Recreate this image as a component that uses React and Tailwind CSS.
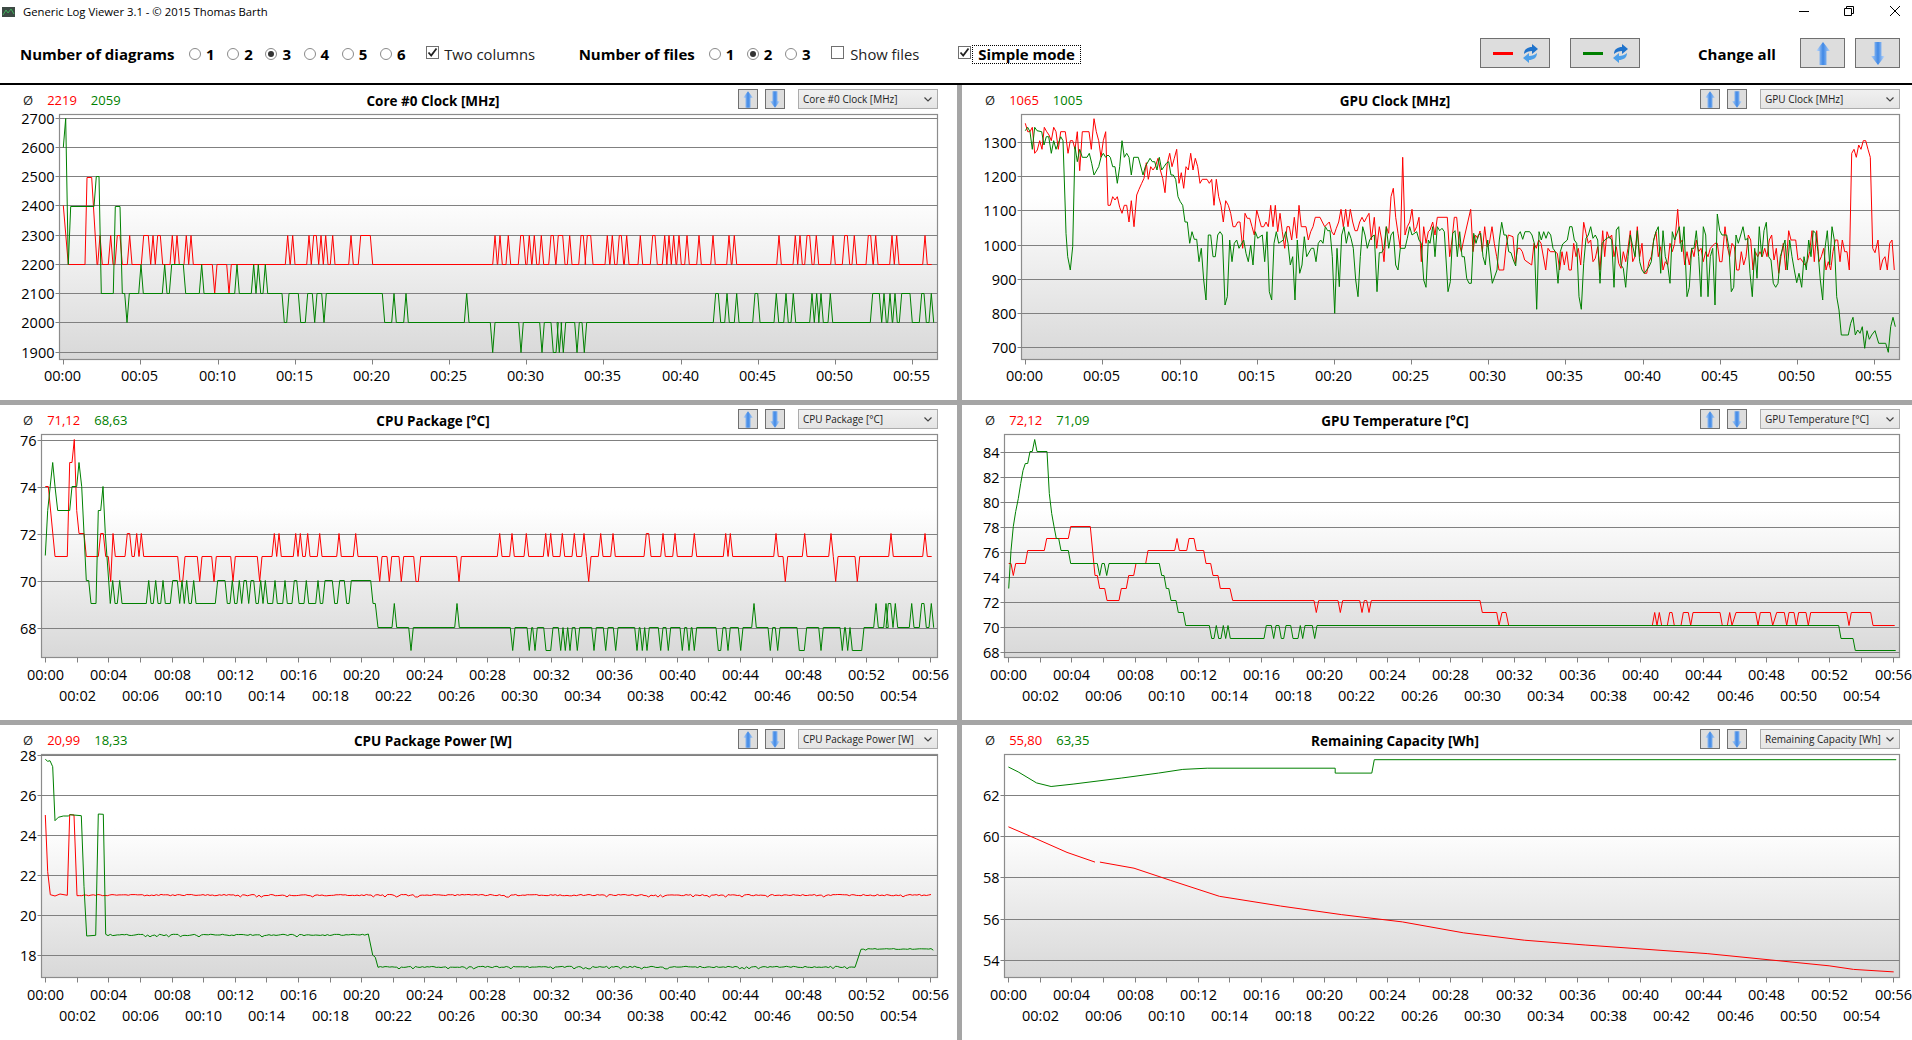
import React from "react";

// helpers for the plot data, coords are in 3x page pixels like the crops
const steps = (base, peak, evs, w = 7) => {
  const out = [];
  evs.forEach((e) => {
    const [a, b, l] = Array.isArray(e) ? e : [e, e];
    const lvl = l ?? peak;
    out.push([a - w, base], [a, lvl]);
    if (b !== a) out.push([b, lvl]);
    out.push([b + w, base]);
  });
  return out;
};
const shift = (evs, d) => evs.map((e) => (Array.isArray(e) ? [e[0] + d, e[1] + d, e[2]] : e + d));
const pairs = (a) => {
  const out = [];
  for (let i = 0; i < a.length; i += 2) out.push([a[i], a[i + 1]]);
  return out;
};
const shiftPts = (pts, d) => pts.map(([x, y]) => [x + d, y]);
const noise = (from, to, y, amp, seed) => {
  const out = [];
  let i = 0;
  for (let x = from; x <= to; x += 7) {
    const r = Math.sin(i * 12.9898 + seed) * 43758.5453;
    const f = r - Math.floor(r);
    const big = f > 0.93 ? 2.6 : 1;
    out.push([x, y + (f - 0.5) * 2 * amp * big]);
    i++;
  }
  return out;
};

const coreRed = [
  ...pairs([190, 316, 205, 493, 255, 493, 261, 232, 275, 232, 291, 493]),
  ...steps(493, 406, [300, 332, [352, 360], 389, [431, 445], 459, [473, 481], 517, 531, 559, 573]),
  ...pairs([637, 493, 644, 580, 651, 493, 680, 493, 687, 580, 694, 493]),
  ...steps(493, 406, [
    863, 878, 927, [941, 949], 963, 977, 998, 1053, [1082, 1111], 1485, 1500,
    ...shift([25, [62, 70], 88, 103, 124, [153, 160], [175, 188], 209, [243, 250], [262, 272], 322, 337, [358, 364], 380, 421, [458, 465], 494, 507, 521, 537, 561, 597, 639, 687, 703, 837, 886, 900, [921, 929], 949, 999, [1034, 1042], 1063, [1105, 1112], 1127, 1176, 1190, 1275], 1500),
  ]),
  [2795, 493],
];
const coreGreen = [
  ...pairs([190, 142, 197, 55, 205, 493, 212, 318, 282, 318, 289, 230, 297, 230, 304, 580, 340, 580, 346, 318, 360, 318, 367, 580, 374, 580, 381, 667, 388, 580]),
  ...steps(580, 493, [423, 494, [515, 550], 605, 711, 761, 775, 796, [853, 860, 667], [902, 916, 667], [944, 944, 667], [972, 972, 667]]),
  [1147, 580],
  [1154, 667],
  ...steps(667, 580, [1182, 1218, 1400, [1478, 1478, 757], ...shift([[63, 63, 757], [126, 126, 757], [160, 168, 757], [178, 178, 757], [190, 190, 757], [231, 231, 757], [253, 253, 757], [647, 655], 681, 710, [765, 773], 829, 858, 880, 936, 950, 963, 991, [1118, 1138], 1152, 1170, 1185, [1205, 1230], [1265, 1272], 1294], 1500)]),
  [2802, 667],
];

const clockRed6 = pairs([196, 70, 203, 95, 210, 95, 217, 82, 224, 160, 232, 150, 239, 122, 246, 148, 253, 82, 260, 95, 267, 105, 274, 122, 281, 82, 288, 95, 295, 148, 302, 95, 316, 95, 324, 160, 331, 122, 338, 122, 345, 148, 352, 95, 359, 212, 367, 95, 387, 95, 394, 148, 402, 56, 409, 95, 416, 122, 423, 172, 430, 122, 437, 95, 444, 316, 451, 316, 458, 290, 465, 300, 472, 290, 479, 322, 486, 340, 493, 316, 500, 316, 507, 366, 514, 302, 522, 380, 530, 285, 537, 268, 545, 250, 552, 235, 559, 188, 565, 238, 572, 200, 579, 210, 586, 200, 594, 175, 601, 210, 608, 235, 615, 278, 622, 190, 629, 160, 636, 200, 643, 175, 650, 148, 657, 250, 664, 218, 671, 265, 678, 200, 685, 210, 692, 160, 699, 210, 706, 175, 713, 200, 720, 250, 727, 238, 741, 238, 748, 250, 755, 238, 762, 316, 769, 238, 776, 290, 783, 316, 790, 366, 797, 302, 805, 316, 812, 340, 819, 380, 826, 380, 833, 366, 840, 366, 848, 445, 855, 340, 862, 355, 869, 355, 876, 380, 883, 405, 890, 330, 897, 355, 904, 380, 911, 380, 918, 366, 925, 380, 932, 316, 939, 380, 946, 316, 953, 395, 960, 340, 967, 395, 974, 445, 981, 380, 988, 380, 995, 420, 1003, 352, 1010, 415, 1017, 316, 1024, 380, 1038, 380, 1045, 420, 1052, 395, 1059, 380, 1066, 352, 1080, 352, 1087, 366, 1094, 380, 1108, 366, 1115, 395, 1122, 405, 1129, 385, 1136, 366, 1143, 328, 1150, 380, 1157, 328, 1164, 380, 1171, 328, 1178, 366, 1185, 392, 1192, 392, 1199, 366, 1206, 352, 1213, 366, 1220, 352, 1227, 340, 1234, 420, 1243, 352, 1250, 445, 1258, 380, 1265, 420, 1272, 485, 1279, 380, 1286, 400, 1293, 290, 1300, 265, 1307, 352, 1314, 400, 1321, 445, 1328, 172, 1335, 405, 1342, 380, 1349, 366, 1356, 328, 1363, 395, 1370, 380, 1377, 352, 1384, 485, 1391, 380, 1398, 430, 1405, 395]);
const clockRed7 = pairs([0, 390, 8, 366, 15, 405, 22, 352, 52, 352, 59, 470, 66, 420, 73, 352, 80, 352, 87, 430, 94, 455, 101, 420, 122, 328, 129, 455, 136, 405, 143, 415, 150, 393, 157, 455, 164, 380, 171, 440, 178, 430, 186, 380, 193, 430, 200, 470, 207, 510, 221, 510, 228, 440, 235, 405, 249, 410, 256, 490, 263, 445, 270, 445, 277, 455, 284, 480, 291, 485, 305, 495, 312, 430, 319, 445, 326, 420, 333, 430, 347, 510, 354, 445, 361, 455, 375, 455, 382, 460, 389, 510, 396, 455, 403, 495, 410, 455, 417, 510, 424, 510, 431, 430, 438, 470, 445, 445, 452, 495, 461, 367, 468, 400, 475, 430, 482, 420, 489, 485, 496, 475, 503, 440, 510, 510, 518, 392, 524, 470, 531, 395, 538, 415, 545, 405, 552, 470, 559, 440, 566, 490, 573, 505, 580, 455, 587, 485, 594, 445, 601, 392, 608, 485, 615, 470, 622, 380, 629, 470, 636, 430, 643, 520, 650, 520, 657, 485, 664, 470, 671, 420, 678, 395, 685, 470, 692, 440, 699, 510, 706, 485, 713, 495, 720, 430, 727, 455, 734, 430, 743, 328, 750, 430, 757, 420, 764, 495, 771, 455, 778, 495, 785, 445, 792, 470, 799, 420, 806, 455, 813, 445, 820, 485, 827, 455, 834, 470, 841, 445, 855, 430, 862, 430, 869, 485, 876, 485, 885, 380, 892, 440, 899, 470, 906, 430, 913, 440, 920, 510, 927, 510, 934, 455, 941, 495, 948, 470, 955, 405, 962, 420, 969, 510, 976, 455, 983, 470, 990, 455, 997, 470, 1004, 445, 1011, 470, 1018, 420, 1025, 405, 1032, 480, 1039, 445, 1046, 520, 1053, 470, 1060, 430, 1067, 510, 1076, 392, 1083, 420, 1097, 420, 1104, 480, 1111, 475, 1118, 485, 1125, 495, 1132, 485, 1139, 455, 1146, 392, 1153, 485, 1160, 392, 1167, 485, 1174, 470, 1181, 445, 1188, 510, 1195, 485, 1202, 510, 1209, 455, 1216, 420, 1223, 420, 1230, 485, 1237, 420, 1244, 455, 1251, 455, 1258, 510, 1265, 160, 1272, 148, 1279, 172, 1286, 135, 1293, 148, 1300, 122, 1307, 122, 1314, 148, 1321, 172, 1328, 445, 1335, 458, 1344, 420, 1351, 510, 1358, 480, 1365, 470, 1372, 510, 1379, 430, 1386, 420, 1393, 510]);
const clockGreen6 = pairs([196, 92, 203, 82, 210, 95, 217, 148, 224, 82, 231, 92, 245, 95, 252, 135, 259, 110, 266, 110, 274, 160, 281, 122, 288, 148, 295, 130, 302, 110, 309, 122, 316, 330, 318, 400, 323, 470, 331, 510, 338, 440, 345, 140, 352, 185, 359, 148, 367, 172, 381, 172, 388, 160, 395, 190, 402, 225, 416, 200, 423, 172, 430, 160, 437, 172, 444, 165, 451, 172, 458, 200, 465, 200, 472, 250, 479, 200, 486, 122, 493, 172, 500, 160, 507, 172, 514, 225, 521, 172, 535, 172, 549, 225, 556, 200, 570, 175, 577, 185, 584, 185, 591, 210, 598, 172, 605, 210, 612, 200, 619, 190, 626, 185, 633, 225, 640, 225, 647, 238, 654, 290, 661, 305, 668, 316, 675, 366, 682, 366, 689, 430, 696, 395, 703, 418, 710, 418, 717, 485, 724, 445, 731, 540, 738, 600, 745, 405, 752, 405, 759, 470, 766, 470, 773, 405, 780, 395, 787, 405, 795, 615, 802, 590, 809, 420, 816, 485, 823, 430, 830, 420, 837, 445, 851, 420, 858, 460, 865, 485, 872, 435, 879, 495, 886, 395, 893, 415, 907, 405, 914, 485, 921, 395, 928, 575, 935, 600, 942, 430, 949, 395, 956, 430, 970, 420, 977, 395, 984, 430, 991, 495, 998, 470, 1005, 600, 1012, 420, 1019, 520, 1026, 495, 1033, 410, 1040, 470, 1054, 445, 1061, 445, 1068, 485, 1075, 430, 1082, 420, 1089, 430, 1096, 380, 1103, 392, 1110, 392, 1117, 470, 1124, 640, 1131, 445, 1138, 560, 1145, 405, 1152, 380, 1159, 430, 1166, 395, 1173, 415, 1180, 445, 1187, 540, 1194, 590, 1201, 470, 1208, 380, 1215, 405, 1222, 445, 1229, 420, 1236, 410, 1243, 405, 1251, 575, 1258, 458, 1265, 458, 1272, 445, 1279, 380, 1286, 445, 1293, 405, 1300, 395, 1307, 495, 1314, 510, 1321, 445, 1335, 445, 1342, 415, 1349, 380, 1356, 405, 1370, 395, 1377, 420, 1384, 430, 1391, 540, 1398, 562, 1405, 420]);
const clockGreen7 = pairs([0, 430, 8, 380, 15, 470, 22, 380, 29, 392, 36, 385, 43, 395, 50, 510, 54, 575, 61, 545, 68, 400, 75, 392, 82, 470, 89, 395, 96, 470, 103, 470, 110, 535, 117, 550, 124, 550, 131, 400, 138, 430, 145, 405, 152, 400, 159, 470, 166, 495, 173, 420, 180, 495, 187, 550, 201, 510, 208, 420, 215, 367, 222, 405, 229, 405, 236, 455, 243, 458, 250, 480, 257, 498, 264, 405, 271, 395, 278, 418, 285, 395, 299, 395, 306, 405, 313, 430, 320, 628, 327, 395, 334, 420, 341, 395, 348, 415, 355, 395, 362, 405, 369, 445, 376, 455, 384, 550, 391, 455, 398, 432, 412, 420, 419, 380, 426, 380, 433, 420, 440, 430, 447, 590, 454, 628, 461, 490, 468, 415, 475, 405, 482, 380, 489, 415, 496, 405, 503, 420, 510, 550, 517, 430, 524, 420, 538, 410, 545, 420, 552, 562, 559, 390, 566, 380, 573, 495, 580, 505, 587, 562, 594, 470, 601, 405, 615, 470, 622, 392, 629, 485, 636, 510, 643, 520, 657, 500, 664, 485, 671, 420, 678, 395, 685, 380, 692, 520, 699, 392, 706, 470, 713, 495, 720, 550, 727, 395, 734, 420, 748, 380, 755, 455, 762, 380, 771, 590, 778, 562, 785, 445, 792, 445, 799, 392, 806, 470, 813, 590, 820, 380, 827, 405, 834, 590, 841, 470, 848, 445, 855, 615, 862, 342, 869, 392, 876, 405, 890, 405, 897, 445, 904, 575, 911, 562, 918, 405, 925, 430, 932, 405, 939, 380, 946, 420, 953, 415, 960, 520, 967, 590, 974, 445, 981, 535, 988, 380, 995, 470, 1002, 392, 1009, 367, 1016, 470, 1023, 480, 1030, 550, 1037, 562, 1044, 550, 1051, 470, 1058, 445, 1065, 420, 1072, 510, 1079, 420, 1086, 470, 1093, 510, 1100, 548, 1107, 520, 1115, 562, 1122, 470, 1129, 510, 1136, 420, 1143, 470, 1150, 392, 1157, 400, 1164, 455, 1171, 540, 1178, 600, 1185, 445, 1192, 392, 1199, 495, 1206, 380, 1213, 420, 1220, 590, 1227, 630, 1234, 705, 1255, 705, 1262, 670, 1269, 652, 1276, 705, 1283, 690, 1290, 700, 1297, 680, 1304, 745, 1311, 692, 1318, 718, 1325, 705, 1335, 692, 1346, 730, 1367, 730, 1375, 757, 1382, 680, 1389, 652, 1396, 680]);

const pkgRed = [
  ...pairs([136, 258, 145, 258, 165, 470, 202, 470, 209, 187, 216, 187, 223, 117, 230, 330, 237, 400, 252, 400, 259, 470, 295, 470, 302, 400, 310, 400, 317, 470, 325, 470, 332, 544, 339, 400, 346, 470]),
  ...steps(470, 400, [[382, 389], 410, 424, [540, 548, 544], [599, 599, 544], [642, 642, 544], [699, 699, 544], [779, 779, 544], 823, 837, 887, 901, 923, 959, 1017, 1067, [1139, 1139, 544], [1168, 1168, 544], [1204, 1204, 544], [1248, 1255, 544], [1377, 1377, 544], 1499,
    ...shift([36, 79, 137, 152, 187, 223, 252, [266, 266, 544], 302, 339, [439, 446], 489, 525, 583, 677, 691, 828, [856, 856, 544], 914, 993, [1007, 1007, 544], [1072, 1072, 544], 1173, 1275], 1500)]),
  [2795, 470],
];
const pkgGreen = [
  ...pairs([136, 466, 143, 330, 158, 187, 165, 260, 173, 330, 209, 330, 216, 260, 230, 260, 237, 187, 245, 260, 252, 400, 259, 540, 266, 540, 273, 610, 288, 610, 295, 330, 302, 330, 309, 258, 316, 400, 331, 610]),
  ...steps(610, 540, [338, 359, 446, 467, 489, [518, 532], 546, 560, 581, [653, 675], 697, 718, [732, 739], [753, 761], 782, 796, 825, 855, [883, 890], 919, 954, [975, 997], [1019, 1033], [1054, 1112]]),
  [1126, 610],
  [1134, 682],
  ...steps(682, 610, [1183, [1233, 1233, 751], 1371,
    ...shift([[38, 38, 751], [88, 88, 751], [105, 105, 751], [138, 152, 751], [182, 182, 751], [196, 196, 751], [210, 210, 751], [232, 232, 751], [282, 282, 751], [317, 317, 751], [347, 347, 751], [411, 411, 751], [427, 427, 751], [441, 441, 751], [482, 482, 751], [505, 505, 751], [547, 547, 751], [567, 567, 751], [583, 583, 751], [655, 662, 751], [684, 684, 751], [722, 722, 751], 762, [811, 811, 751], [833, 833, 751], [898, 913, 751], [963, 963, 751], [1027, 1027, 751], [1043, 1043, 751], [1057, 1085, 751], 1128, 1158, [1165, 1172], 1186, 1235, [1265, 1272], 1294], 1500)]),
  [2802, 682],
];

const tempRed = [
  ...pairs([146, 489, 153, 489, 160, 527, 167, 489, 196, 489, 203, 452, 253, 452, 260, 414, 325, 414, 332, 380, 391, 380, 405, 527, 412, 527, 419, 565, 434, 565, 441, 602, 477, 602, 484, 565, 499, 565, 506, 527, 521, 527, 528, 489, 557, 489, 564, 452, 644, 452, 651, 414, 658, 452, 680, 452, 687, 414, 702, 414, 709, 452, 731, 452, 738, 489, 752, 489, 759, 527, 774, 527, 781, 565, 810, 565, 818, 602, 1062, 602, 1069, 638, 1076, 602, 1134, 602, 1141, 638, 1148, 602, 1199, 602, 1206, 638, 1213, 602, 1220, 602, 1227, 638, 1234, 602]),
  ...shiftPts(pairs([150, 602, 157, 638, 200, 638, 207, 677, 216, 638, 228, 638, 236, 677, 667, 677, 674, 638, 681, 677, 688, 638, 695, 677, 712, 677, 719, 638, 726, 638, 733, 677, 753, 677, 760, 638, 775, 638, 782, 677, 789, 638, 870, 638, 877, 677, 892, 677, 899, 638, 906, 677, 918, 638, 977, 638, 984, 677, 991, 638, 1021, 638, 1028, 677, 1040, 638, 1063, 638, 1070, 677, 1077, 638, 1092, 638, 1099, 677, 1106, 638, 1128, 638, 1135, 677, 1142, 638, 1250, 638, 1257, 677, 1264, 638, 1322, 638, 1329, 677, 1394, 677]), 1410),
];
const tempGreen = [
  ...pairs([146, 565, 153, 450, 160, 380, 167, 335, 175, 295, 182, 250, 189, 210, 196, 190, 203, 190, 210, 155, 217, 155, 224, 117, 231, 155, 261, 155, 268, 280, 275, 340, 282, 380, 289, 414, 296, 414, 303, 452, 325, 452, 332, 489, 412, 489, 419, 527, 426, 489, 433, 489, 440, 527, 447, 489, 598, 489, 605, 527, 612, 527, 619, 565, 626, 565, 633, 602, 648, 602, 655, 638, 670, 638, 677, 677, 748, 677, 755, 714, 762, 714, 769, 677, 776, 714, 783, 714, 790, 677, 797, 714, 804, 677, 811, 714, 912, 714, 919, 677, 934, 677, 941, 714, 948, 677, 957, 677, 964, 714, 971, 714, 978, 677, 992, 677, 999, 714, 1014, 714, 1021, 677, 1028, 714, 1035, 677, 1057, 677, 1064, 714, 1071, 677]),
  [2636, 677], [2643, 714], [2679, 714], [2686, 751], [2807, 751],
];

const powerRed = [
  ...pairs([136, 285, 143, 455, 151, 524, 165, 528, 180, 522, 202, 526, 209, 284, 222, 285, 231, 527]),
  ...noise(238, 2798, 525.5, 2.2, 1.7),
];
const powerGreen = [
  ...pairs([136, 118, 143, 124, 150, 122, 158, 140, 165, 302, 175, 292, 190, 288, 205, 288, 210, 284, 244, 287, 252, 500, 260, 648, 287, 646, 295, 282, 310, 283, 317, 643]),
  ...noise(324, 1098, 645, 2.2, 4.3),
  ...pairs([1105, 642, 1118, 705, 1126, 712, 1134, 742]),
  ...noise(1141, 2558, 741, 2.2, 7.9),
  ...pairs([2565, 742, 2583, 688]),
  ...noise(2590, 2800, 687, 1.4, 2.2),
];

// these two were read off the shrunk picture (1568 wide)
const shrunk = (a) => pairs(a).map(([x, y]) => [x * 1.2194 * 3 - 2880, (y * 1.2194 - 720) * 3]);
const capGreen = shrunk([827, 629, 835, 633, 850, 642, 862, 645, 880, 643, 920, 638, 950, 634, 970, 631, 990, 630, 1095, 630, 1095, 634, 1125, 634, 1127, 623, 1555, 623]);
const capRed = shrunk([827, 678, 850, 688, 875, 699, 898, 707]);
const capRed2 = shrunk([902, 707, 930, 712, 960, 722, 1000, 735, 1050, 743, 1100, 750, 1150, 756, 1200, 765, 1250, 771, 1300, 775, 1400, 782, 1500, 792, 1520, 795, 1553, 797]);

const charts = [
  { title: "Core #0 Clock [MHz]", a: "2219", b: "2059", x0: 0, top: 114, oy: 100, ox: 0, left: 59.5, bottom: 245.5,
    ticks: [["2700", 118], ["2600", 147], ["2500", 176], ["2400", 205], ["2300", 235], ["2200", 264], ["2100", 293], ["2000", 322], ["1900", 352]],
    t0: 63.3, red: coreRed, green: coreGreen, snap: true, five: true },
  { title: "GPU Clock [MHz]", a: "1065", b: "1005", x0: 962, top: 114, oy: 100, ox: 960, left: 59.5, bottom: 245.5,
    ticks: [["1300", 142], ["1200", 176], ["1100", 210], ["1000", 245], ["900", 279], ["800", 313], ["700", 347]],
    t0: 63.3, red: [...clockRed6, ...shiftPts(clockRed7, 1410)], green: [...clockGreen6, ...shiftPts(clockGreen7, 1410)], five: true },
  { title: "CPU Package [°C]", a: "71,12", b: "68,63", x0: 0, top: 434, oy: 400, ox: 0, left: 41.5, bottom: 223.5,
    ticks: [["76", 440], ["74", 487], ["72", 534], ["70", 581], ["68", 628]],
    t0: 45.3, red: pkgRed, green: pkgGreen, snap: true },
  { title: "GPU Temperature [°C]", a: "72,12", b: "71,09", x0: 962, top: 434, oy: 400, ox: 960, left: 42.5, bottom: 223.5,
    ticks: [["84", 452], ["82", 477], ["80", 502], ["78", 527], ["76", 552], ["74", 577], ["72", 602], ["70", 627], ["68", 652]],
    t0: 46.3, red: tempRed, green: tempGreen, snap: true },
  { title: "CPU Package Power [W]", a: "20,99", b: "18,33", x0: 0, top: 754, oy: 720, ox: 0, left: 41.5, bottom: 223.5,
    ticks: [["28", 755], ["26", 795], ["24", 835], ["22", 875], ["20", 915], ["18", 955]],
    t0: 45.3, red: powerRed, green: powerGreen },
  { title: "Remaining Capacity [Wh]", a: "55,80", b: "63,35", x0: 962, top: 754, oy: 720, ox: 960, left: 42.5, bottom: 223.5,
    ticks: [["62", 795], ["60", 836], ["58", 877], ["56", 919], ["54", 960]],
    t0: 46.3, red: capRed, red2: capRed2, green: capGreen },
];

function Plot({ c }) {
  const right = 937.5;
  const pts = (list) =>
    list
      .map(([x, y]) => {
        const px = c.ox + x / 3 - c.x0;
        let py = c.oy + y / 3 - c.top;
        if (c.snap) py = Math.floor(py) + 0.5;
        return `${px.toFixed(1)},${py.toFixed(1)}`;
      })
      .join(" ");
  const xs = [];
  if (c.five) {
    for (let m = 0; m <= 55; m += 5) xs.push({ m, row: 0 });
  } else {
    for (let m = 0; m <= 56; m += 2) xs.push({ m, row: m % 4 === 0 ? 0 : 1 });
  }
  const perMin = c.five ? 15.43 : 15.79;
  return (
    <svg width="950" height="286" className="block overflow-visible">
      <defs>
        <linearGradient id="plotFill" x1="0" y1="0" x2="0" y2="1">
          <stop offset="0.33" stopColor="#ffffff" />
          <stop offset="1" stopColor="#d8d8d8" />
        </linearGradient>
      </defs>
      <rect x={c.left} y="0.5" width={right - c.left} height={c.bottom - 0.5} fill="url(#plotFill)" stroke="#8c8c8c" strokeWidth="1.2" />
      {c.ticks.map(([label, y]) => {
        const yy = y - c.top + 0.5;
        return (
          <g key={label}>
            <line x1={c.left - 4} x2={right} y1={yy} y2={yy} stroke="#808080" strokeWidth="1" />
            <text x={c.left - 5} y={yy + 5.5} textAnchor="end" fontSize="14.5" fill="#000">{label}</text>
          </g>
        );
      })}
      {xs.map(({ m, row }) => {
        const x = Math.round(c.t0 + m * perMin) + 0.5;
        const label = `00:${String(m).padStart(2, "0")}`;
        return (
          <g key={m}>
            <line x1={x} x2={x} y1={c.bottom} y2={c.bottom + 5} stroke="#808080" strokeWidth="1" />
            <text x={c.five ? x - 1 : x} y={c.bottom + (c.five ? 21.5 : 22) + row * 21} textAnchor="middle" fontSize="14.5" fill="#000">{label}</text>
          </g>
        );
      })}
      <polyline points={pts(c.red)} fill="none" stroke="#ff0000" strokeWidth="1" strokeLinejoin="round" />
      {c.red2 && <polyline points={pts(c.red2)} fill="none" stroke="#ff0000" strokeWidth="1" strokeLinejoin="round" />}
      <polyline points={pts(c.green)} fill="none" stroke="#008000" strokeWidth="1" strokeLinejoin="round" />
    </svg>
  );
}

function Arrow({ down, w, h }) {
  return (
    <svg width={w} height={h} viewBox="0 0 14 23" className={down ? "rotate-180" : ""}>
      <defs>
        <linearGradient id="arrowFill" x1="0" y1="0" x2="1" y2="0">
          <stop offset="0" stopColor="#cfe2fa" />
          <stop offset="0.5" stopColor="#3f88e6" />
          <stop offset="1" stopColor="#b4d2f6" />
        </linearGradient>
      </defs>
      <polygon points="7,0 14,9 10.5,9 10.5,23 3.5,23 3.5,9 0,9" fill="url(#arrowFill)" />
    </svg>
  );
}

function SwapIcon() {
  return (
    <svg width="15" height="19" viewBox="0 0 15 19">
      <path d="M1 10 C1 5 5 3 9 3 L9 0 L15 5 L9 10 L9 7 C6 7 3 8 1 10Z" fill="#1f73cc" />
      <path d="M14 9 C14 14 10 16 6 16 L6 19 L0 14 L6 9 L6 12 C9 12 12 11 14 9Z" fill="#4b9fe9" />
    </svg>
  );
}

function Panel({ c }) {
  return (
    <div className="bg-white h-[315px]">
      <div className="flex items-start h-[29px]">
        <div className="w-[300px] h-[29px] pl-[23px] flex items-center gap-[14px] text-[13px] pt-[3px]">
          <span className="text-[#222]">Ø</span>
          <span className="text-[#ff0000]">{c.a}</span>
          <span className="text-[#008000]">{c.b}</span>
        </div>
        <div className="w-[266px] h-[29px] flex items-center justify-center text-[13.5px] font-bold text-black pt-[3px] whitespace-nowrap">{c.title}</div>
        <div className="ml-[172px] mt-[4px] flex">
          <div className="w-5 h-5 bg-[#dddddd] border border-[#707070] flex items-center justify-center"><Arrow w={10} h={17} /></div>
          <div className="w-5 h-5 ml-[7px] bg-[#dddddd] border border-[#707070] flex items-center justify-center"><Arrow down w={10} h={17} /></div>
          <div className="w-[140px] h-5 ml-[13px] pl-[4px] pr-[5px] border border-[#acacac] bg-gradient-to-b from-[#f0f0f0] to-[#e5e5e5] flex items-center justify-between text-[10px] text-[#222] whitespace-nowrap">
            <span className="pt-[1px]">{c.title}</span>
            <svg width="8" height="5" viewBox="0 0 8 5"><path d="M0.5 0.5 L4 4 L7.5 0.5" fill="none" stroke="#444" strokeWidth="1.2" /></svg>
          </div>
        </div>
      </div>
      <Plot c={c} />
    </div>
  );
}

function Radio({ label, on }) {
  return (
    <div className="w-[38.2px] flex items-center shrink-0">
      <span className="w-3 h-3 -mt-[2px] rounded-full border border-[#8a8a8a] bg-white flex items-center justify-center">
        {on && <span className="w-[6px] h-[6px] rounded-full bg-[#333]" />}
      </span>
      <span className="ml-[5px] font-bold text-[15px] text-black">{label}</span>
    </div>
  );
}

function Check({ on }) {
  return (
    <span className="w-[13px] h-[13px] -mt-[4px] border border-[#707070] bg-white flex items-center justify-center shrink-0">
      {on && <svg width="11" height="11" viewBox="0 0 11 11"><path d="M1.5 5.5 L4.2 8.5 L9.5 1.5" fill="none" stroke="#222" strokeWidth="1.8" /></svg>}
    </span>
  );
}

function ToolBtn({ children, w }) {
  return <div className={`${w} h-[30px] bg-[#dddddd] border border-[#707070] flex items-center justify-center`}>{children}</div>;
}

export default function App() {
  return (
    <div className="w-[1912px] h-[1040px] bg-white overflow-hidden font-['Open_Sans','Noto_Sans',sans-serif]">
      <div className="h-[26px] flex items-center text-[11.3px] text-black relative">
        <svg width="13" height="10" viewBox="0 0 13 10" className="ml-[2px] -mt-[2px]">
          <rect width="13" height="10" fill="#3c4a44" />
          <path d="M1 8 L4 3 L6 6 L9 2 L12 7" fill="none" stroke="#3fae5a" strokeWidth="1" />
        </svg>
        <span className="ml-[8px] -mt-[2px]">Generic Log Viewer 3.1 - © 2015 Thomas Barth</span>
        <div className="ml-auto mr-[12px] flex items-center -mt-[5px]">
          <svg width="10" height="10" viewBox="0 0 10 10"><path d="M0 5.5 H10" stroke="#000" strokeWidth="1" /></svg>
          <svg width="10" height="10" viewBox="0 0 10 10" className="ml-[35px]"><path d="M0.5 2.5 H7.5 V9.5 H0.5 Z M2.5 2.5 V0.5 H9.5 V7.5 H7.5" fill="none" stroke="#000" strokeWidth="1" /></svg>
          <svg width="10" height="10" viewBox="0 0 10 10" className="ml-[36px]"><path d="M0 0 L10 10 M10 0 L0 10" stroke="#000" strokeWidth="1" /></svg>
        </div>
      </div>

      <div className="h-[57px] pl-[20px] flex items-center text-[15px] text-black">
        <div className="w-[169px] shrink-0 font-bold whitespace-nowrap">Number of diagrams</div>
        {["1", "2", "3", "4", "5", "6"].map((n) => <Radio key={n} label={n} on={n === "3"} />)}
        <div className="ml-[8px] w-[152.5px] flex items-center shrink-0">
          <Check on />
          <span className="ml-[5px] text-[#222] text-[14.8px] whitespace-nowrap">Two columns</span>
        </div>
        <div className="w-[130px] shrink-0 font-bold whitespace-nowrap">Number of files</div>
        {["1", "2", "3"].map((n) => <Radio key={n} label={n} on={n === "2"} />)}
        <div className="ml-[8px] w-[127px] flex items-center shrink-0">
          <Check />
          <span className="ml-[6px] text-[#222] text-[14.8px] whitespace-nowrap">Show files</span>
        </div>
        <div className="flex items-center shrink-0">
          <Check on />
          <span className="ml-[1px] px-[5px] h-[19px] flex items-center border border-dotted border-black font-bold -mt-[1px] whitespace-nowrap">Simple mode</span>
        </div>
        <div className="ml-auto mr-[12px] mb-[3px] flex items-center">
          <ToolBtn w="w-[70px]">
            <span className="w-5 h-[3px] bg-[#ff0000]" />
            <span className="ml-[10px] flex"><SwapIcon /></span>
          </ToolBtn>
          <div className="ml-[20px]">
            <ToolBtn w="w-[70px]">
              <span className="w-5 h-[3px] bg-[#008000]" />
              <span className="ml-[10px] flex"><SwapIcon /></span>
            </ToolBtn>
          </div>
          <span className="ml-[58px] w-[78px] font-bold whitespace-nowrap mt-[3px]">Change all</span>
          <div className="ml-[24px]"><ToolBtn w="w-[45px]"><Arrow w={14} h={23} /></ToolBtn></div>
          <div className="ml-[10px]"><ToolBtn w="w-[45px]"><Arrow down w={14} h={23} /></ToolBtn></div>
        </div>
      </div>
      <div className="h-[2px] bg-black" />

      <div className="grid grid-cols-[957px_5px_950px] grid-rows-[315px_5px_315px_5px_315px]">
        <Panel c={charts[0]} />
        <div className="bg-[#a5a5a5]" />
        <Panel c={charts[1]} />
        <div className="col-span-3 bg-[#a5a5a5]" />
        <Panel c={charts[2]} />
        <div className="bg-[#a5a5a5]" />
        <Panel c={charts[3]} />
        <div className="col-span-3 bg-[#a5a5a5]" />
        <Panel c={charts[4]} />
        <div className="bg-[#a5a5a5]" />
        <Panel c={charts[5]} />
      </div>
    </div>
  );
}
